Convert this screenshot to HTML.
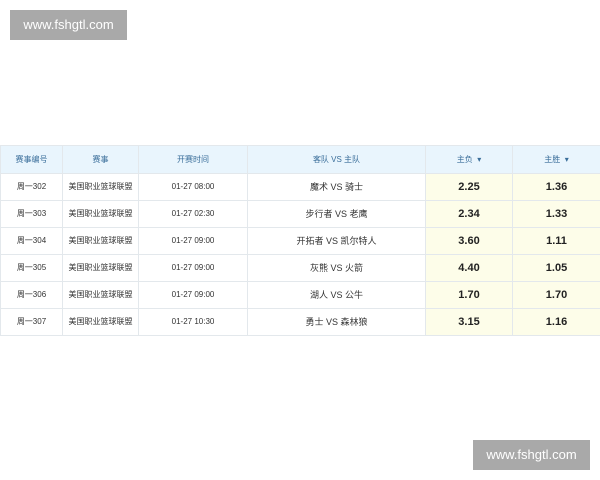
<!DOCTYPE html><html><head><style>
body{margin:0;width:600px;height:480px;background:#fff;position:relative;font-family:"Liberation Sans","Noto Sans CJK SC",sans-serif;overflow:hidden}
.wm{position:absolute;background:#a9a9a9;color:#fff;font-size:13px;line-height:30px;text-align:center;width:117px;height:30px}
table{position:absolute;left:0;top:145px;width:600px;border-collapse:collapse;table-layout:fixed;font-size:8px;color:#333}
td,th{border:1px solid #e3e8ec;text-align:center;height:26px;padding:0;line-height:12px}
th{background:#e9f5fd;color:#3a6e9a;font-weight:normal;height:27px}
td.o{background:#fdfde9;font-size:11px;font-weight:bold;color:#222}
td.t{font-size:9px}
</style></head><body>
<div class="wm" style="left:10px;top:10px">www.fshgtl.com</div>
<div class="wm" style="left:473px;top:440px">www.fshgtl.com</div>
<table>
<colgroup><col style="width:62px"><col style="width:76px"><col style="width:109px"><col style="width:178px"><col style="width:87px"><col style="width:88px"></colgroup>
<tr><th>赛事编号</th><th>赛事</th><th>开赛时间</th><th>客队 VS 主队</th><th>主负 &nbsp;▾</th><th>主胜 &nbsp;▾</th></tr>
<tr><td>周一302</td><td>美国职业篮球联盟</td><td>01-27 08:00</td><td class="t">魔术 VS 骑士</td><td class="o">2.25</td><td class="o">1.36</td></tr>
<tr><td>周一303</td><td>美国职业篮球联盟</td><td>01-27 02:30</td><td class="t">步行者 VS 老鹰</td><td class="o">2.34</td><td class="o">1.33</td></tr>
<tr><td>周一304</td><td>美国职业篮球联盟</td><td>01-27 09:00</td><td class="t">开拓者 VS 凯尔特人</td><td class="o">3.60</td><td class="o">1.11</td></tr>
<tr><td>周一305</td><td>美国职业篮球联盟</td><td>01-27 09:00</td><td class="t">灰熊 VS 火箭</td><td class="o">4.40</td><td class="o">1.05</td></tr>
<tr><td>周一306</td><td>美国职业篮球联盟</td><td>01-27 09:00</td><td class="t">湖人 VS 公牛</td><td class="o">1.70</td><td class="o">1.70</td></tr>
<tr><td>周一307</td><td>美国职业篮球联盟</td><td>01-27 10:30</td><td class="t">勇士 VS 森林狼</td><td class="o">3.15</td><td class="o">1.16</td></tr>
</table>
</body></html>
